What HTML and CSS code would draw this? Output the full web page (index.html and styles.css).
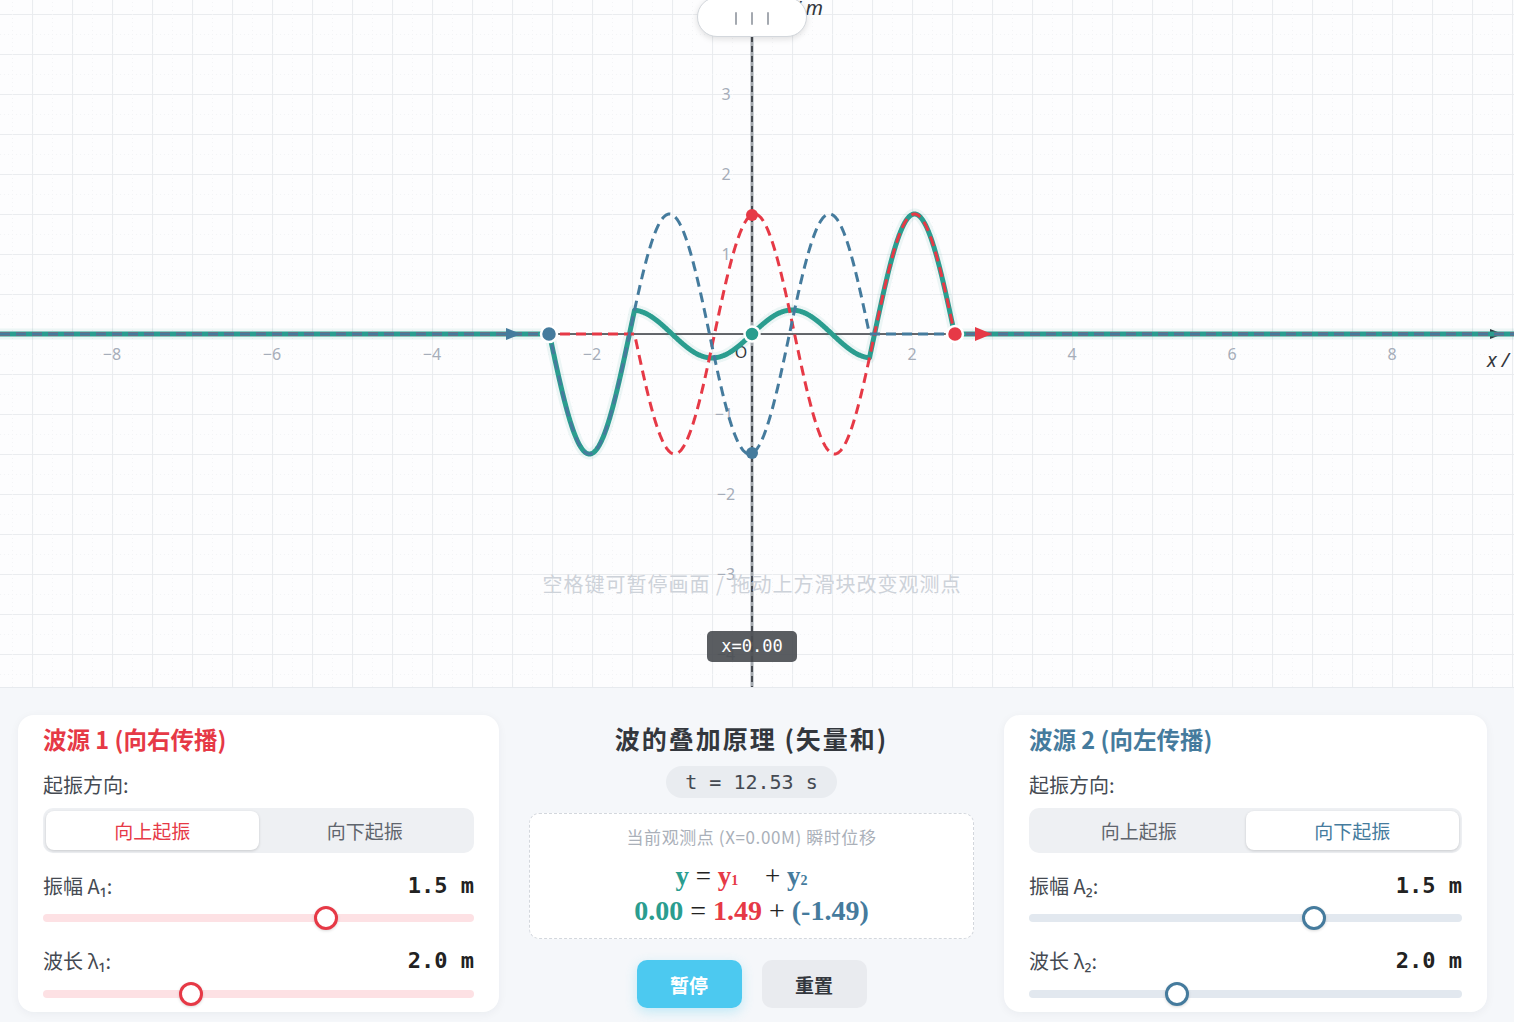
FILE: index.html
```html
<!DOCTYPE html>
<html lang="zh-CN">
<head>
<meta charset="utf-8">
<title>波的叠加原理</title>
<link rel="stylesheet" href="styles.css">
</head>
<body>
<div class="app">
  <div class="stage">
    <svg class="plot" width="1514" height="687" viewBox="0 0 1514 687">
      <defs>
        <pattern id="grid" x="32" y="14" width="40" height="40" patternUnits="userSpaceOnUse">
          <path d="M0 0.5H40M0.5 0V40" stroke="#eaecef" stroke-width="1.2" fill="none"/>
          <path d="M0 20.5H40M20.5 0V40" stroke="#f3f4f6" stroke-width="1" stroke-dasharray="1 3" fill="none"/>
        </pattern>
      </defs>
      <rect x="0" y="0" width="1514" height="687" fill="url(#grid)"/>
      <g class="ticks">
        <text x="112" y="360">−8</text>
        <text x="272" y="360">−6</text>
        <text x="432" y="360">−4</text>
        <text x="592" y="360">−2</text>
        <text x="912" y="360">2</text>
        <text x="1072" y="360">4</text>
        <text x="1232" y="360">6</text>
        <text x="1392" y="360">8</text>
        <text x="726" y="100">3</text>
        <text x="726" y="180">2</text>
        <text x="726" y="260">1</text>
        <text x="724" y="420">−1</text>
        <text x="726" y="500">−2</text>
        <text x="726" y="580">−3</text>
        <text x="726" y="660">−4</text>
      </g>
      <text class="origin" x="741" y="358">O</text>
      <text class="axname" x="823" y="15" text-anchor="end">y / m</text>
      <text class="axname" x="1487" y="367">x / m</text>
      <line x1="0" y1="334" x2="1514" y2="334" stroke="#33373d" stroke-width="1.6"/>
      <polygon points="1490,329 1503,334 1490,339" fill="#33373d"/>
      <line x1="752" y1="36" x2="752" y2="687" stroke="#a2a7ad" stroke-width="3"/>
      <line x1="752" y1="36" x2="752" y2="687" stroke="#30343a" stroke-width="1.6" stroke-dasharray="6 4"/>
      <path id="sumGlow" fill="none" stroke="#2a9d8f" stroke-opacity="0.08" stroke-width="11" stroke-linejoin="round"/>
      <path id="sum" fill="none" stroke="#2a9d8f" stroke-width="5" stroke-linejoin="round" stroke-linecap="round"/>
      <path id="w1" fill="none" stroke="#e63946" stroke-width="3" stroke-dasharray="10 6"/>
      <path id="w2" fill="none" stroke="#457b9d" stroke-width="3" stroke-dasharray="10 6"/>
      <polygon points="975,327 992,334 975,341" fill="#e63946"/>
      <polygon points="506,328 521,334 506,340" fill="#457b9d"/>
      <circle cx="752" cy="215" r="6" fill="#e63946"/>
      <circle cx="752" cy="453" r="6" fill="#457b9d"/>
      <circle cx="549" cy="334" r="8" fill="#457b9d" stroke="#fff" stroke-width="2.5"/>
      <circle cx="955" cy="334" r="8" fill="#e63946" stroke="#fff" stroke-width="2.5"/>
      <circle cx="752" cy="334" r="7.5" fill="#2a9d8f" stroke="#fff" stroke-width="2.5"/>
    </svg>
    <div class="handle"><span></span><span></span><span></span></div>
    <div class="hint">空格键可暂停画面 / 拖动上方滑块改变观测点</div>
    <div class="tip">x=0.00</div>
  </div>

  <div class="panel">
    <section class="card card-red">
      <h2 class="card-title">波源 1 (向右传播)</h2>
      <div class="dir-label">起振方向:</div>
      <div class="seg">
        <button class="seg-btn active">向上起振</button>
        <button class="seg-btn">向下起振</button>
      </div>
      <div class="row first">
        <span class="lbl">振幅 A₁:</span>
        <span class="val">1.5 m</span>
      </div>
      <input class="slider s-amp" type="range" min="0.5" max="2" step="0.1" value="1.5">
      <div class="row second">
        <span class="lbl">波长 λ₁:</span>
        <span class="val">2.0 m</span>
      </div>
      <input class="slider s-wl" type="range" min="1" max="4" step="0.1" value="2">
    </section>

    <section class="center">
      <h1 class="main-title">波的叠加原理 (矢量和)</h1>
      <div class="time">t = 12.53 s</div>
      <div class="readout">
        <div class="sub">当前观测点 (X=0.00M) 瞬时位移</div>
        <div class="eq eq1"><b class="c-sum">y</b> <span class="op">=</span> <b class="c-1">y<small>1</small></b> <span class="op plus">+</span> <b class="c-2">y<small>2</small></b></div>
        <div class="eq eq2"><b class="c-sum">0.00</b> <span class="op">=</span> <b class="c-1">1.49</b> <span class="op">+</span> <b class="c-2">(-1.49)</b></div>
      </div>
      <div class="btns">
        <button class="btn btn-pause">暂停</button>
        <button class="btn btn-reset">重置</button>
      </div>
    </section>

    <section class="card card-blue">
      <h2 class="card-title">波源 2 (向左传播)</h2>
      <div class="dir-label">起振方向:</div>
      <div class="seg">
        <button class="seg-btn">向上起振</button>
        <button class="seg-btn active">向下起振</button>
      </div>
      <div class="row first">
        <span class="lbl">振幅 A₂:</span>
        <span class="val">1.5 m</span>
      </div>
      <input class="slider s-amp" type="range" min="0.5" max="2" step="0.1" value="1.5">
      <div class="row second">
        <span class="lbl">波长 λ₂:</span>
        <span class="val">2.0 m</span>
      </div>
      <input class="slider s-wl" type="range" min="1" max="4" step="0.1" value="2">
    </section>
  </div>
</div>
<script src="script.js"></script>
</body>
</html>
```

FILE: styles.css
```css
html, body {
  margin: 0;
  padding: 0;
  width: 1514px;
  height: 1022px;
  overflow: hidden;
  background: #f5f7fa;
  font-family: "Noto Sans CJK SC", "Noto Sans", sans-serif;
}

.app {
  width: 1514px;
}

.stage {
  position: relative;
  height: 687px;
  background: #fdfdfe;
  overflow: hidden;
}

.plot {
  display: block;
}

.ticks text {
  font-family: "Noto Sans", sans-serif;
  font-size: 16px;
  fill: #a6adb9;
  text-anchor: middle;
}

.origin {
  font-family: "Noto Sans", sans-serif;
  font-size: 16px;
  fill: #33373d;
  text-anchor: middle;
}

.axname {
  font-family: "Noto Sans", sans-serif;
  font-style: italic;
  font-size: 20px;
  fill: #33373d;
}

.handle {
  position: absolute;
  left: 697px;
  top: -3px;
  width: 110px;
  height: 40px;
  box-sizing: border-box;
  background: #fff;
  border: 1px solid #d3d7dc;
  border-radius: 20px;
  box-shadow: 0 2px 6px rgba(0, 0, 0, 0.12);
  display: flex;
  justify-content: center;
  align-items: center;
  gap: 14px;
  padding-top: 3px;
}

.handle span {
  width: 2px;
  height: 13px;
  background: #a4a9b0;
  border-radius: 1px;
}

.hint {
  position: absolute;
  left: 0;
  width: 1504px;
  top: 570px;
  text-align: center;
  font-size: 20px;
  line-height: 28px;
  color: #cdd2d9;
  letter-spacing: 1px;
}

.tip {
  position: absolute;
  left: 707px;
  top: 631px;
  width: 90px;
  height: 31px;
  border-radius: 5px;
  background: rgba(72, 75, 80, 0.9);
  color: #fff;
  font-family: "DejaVu Sans Mono", monospace;
  font-size: 17px;
  line-height: 31px;
  text-align: center;
}

.panel {
  display: grid;
  grid-template-columns: 481px 1fr 483px;
  padding: 27px 27px 0 18px;
  height: 335px;
  box-sizing: border-box;
  border-top: 1px solid #e7eaee;
  background: #f5f7fa;
}

.card {
  background: #fff;
  border-radius: 16px;
  box-shadow: 0 2px 10px rgba(20, 30, 50, 0.05);
  height: 297px;
  box-sizing: border-box;
  padding: 8px 25px 0;
}

.card-title {
  margin: 0;
  font-size: 23.5px;
  line-height: 32px;
  font-weight: 700;
}

.card-red .card-title { color: #e63946; }
.card-blue .card-title { color: #457b9d; }

.dir-label {
  margin-top: 17px;
  font-size: 20px;
  line-height: 26px;
  color: #454a52;
}

.seg {
  margin-top: 10px;
  height: 45px;
  box-sizing: border-box;
  padding: 3px;
  border-radius: 10px;
  background: #eef0f3;
  display: grid;
  grid-template-columns: 1fr 1fr;
}

.seg-btn {
  border: 0;
  background: transparent;
  font-family: "Noto Sans CJK SC", sans-serif;
  font-size: 19px;
  color: #5f656d;
  border-radius: 8px;
  padding: 0;
  cursor: pointer;
}

.seg-btn.active {
  background: #fff;
  box-shadow: 0 1px 3px rgba(0, 0, 0, 0.16);
}

.card-red .seg-btn.active { color: #e63946; }
.card-blue .seg-btn.active { color: #457b9d; }

.row {
  display: flex;
  justify-content: space-between;
  align-items: center;
  height: 24px;
}

.row.first { margin-top: 20px; }
.row.second { margin-top: 26px; }

.lbl {
  font-size: 20px;
  color: #454a52;
}

.val {
  font-family: "DejaVu Sans Mono", monospace;
  font-weight: 700;
  font-size: 22px;
  color: #222;
}

.slider {
  -webkit-appearance: none;
  appearance: none;
  display: block;
  width: 100%;
  height: 8px;
  margin: 17px 0 0;
  border-radius: 4px;
  outline: none;
}

.slider.s-wl { margin-top: 18px; }

.card-red .slider { background: #fde1e4; }
.card-blue .slider { background: #e2e8ef; }

.slider::-webkit-slider-thumb {
  -webkit-appearance: none;
  appearance: none;
  width: 24px;
  height: 24px;
  box-sizing: border-box;
  border-radius: 50%;
  background: #fff;
  border: 3px solid #e63946;
  box-shadow: 0 1px 3px rgba(0, 0, 0, 0.15);
  cursor: pointer;
}

.card-blue .slider::-webkit-slider-thumb {
  border-color: #457b9d;
}

.center {
  display: flex;
  flex-direction: column;
  align-items: center;
  padding: 0 30px;
}

.main-title {
  margin: 7px 0 0;
  font-size: 25px;
  line-height: 32px;
  font-weight: 700;
  color: #33373d;
  letter-spacing: 2px;
}

.time {
  margin-top: 12px;
  height: 32px;
  line-height: 32px;
  padding: 0 19px;
  border-radius: 16px;
  background: #e9ecf0;
  font-family: "DejaVu Sans Mono", monospace;
  font-size: 20px;
  color: #454a52;
}

.readout {
  margin-top: 15px;
  align-self: stretch;
  height: 126px;
  box-sizing: border-box;
  border: 1.5px dashed #d3d7dd;
  border-radius: 10px;
  background: #fff;
  text-align: center;
  padding-top: 12px;
}

.sub {
  font-size: 17px;
  line-height: 22px;
  color: #aab0b9;
  letter-spacing: 0.6px;
}

.eq {
  font-family: "Liberation Serif", "Times New Roman", serif;
  color: #222;
  white-space: pre;
}

.eq1 {
  margin-top: 13px;
  font-size: 27px;
  line-height: 30px;
  padding-right: 20px;
}

.eq2 {
  margin-top: 0;
  font-size: 28px;
  line-height: 29px;
}

.eq b { font-weight: 700; }

.eq small {
  font-size: 14px;
  vertical-align: 0;
}

.eq .plus { margin-left: 20px; }

.c-sum { color: #2a9d8f; }
.c-1 { color: #e63946; }
.c-2 { color: #457b9d; }

.btns {
  margin-top: 21px;
  display: flex;
  gap: 20px;
}

.btn {
  width: 105px;
  height: 48px;
  border: 0;
  border-radius: 10px;
  font-family: "Noto Sans CJK SC", sans-serif;
  font-size: 19px;
  font-weight: 700;
  cursor: pointer;
}

.btn-pause {
  background: #4cc9f0;
  color: #fff;
  box-shadow: 0 4px 12px rgba(76, 201, 240, 0.3);
}

.btn-reset {
  background: #e9ebef;
  color: #33373d;
}
```

FILE: script.js
```js
(function () {
  var X0 = 752, Y0 = 334, S = 80;
  var A = 1.5, k = Math.PI, delta = 0.1;
  var xf1 = 2.5 + delta / Math.PI;
  var tail1 = xf1 - 4;
  var xf2 = -xf1;
  var tail2 = xf2 + 4;

  function y1(x) {
    return (x <= xf1 && x >= tail1) ? A * Math.sin(k * (xf1 - x)) : 0;
  }
  function y2(x) {
    return (x >= xf2 && x <= tail2) ? -A * Math.sin(k * (x - xf2)) : 0;
  }
  function ys(x) { return y1(x) + y2(x); }

  var breaks = [tail1, xf1, xf2, tail2].map(function (b) { return X0 + b * S; });

  function build(f) {
    var xs = [];
    for (var px = 0; px <= 1514; px += 0.5) xs.push(px);
    breaks.forEach(function (b) { xs.push(b - 0.01, b + 0.01); });
    xs.sort(function (a, b) { return a - b; });
    var d = '';
    for (var i = 0; i < xs.length; i++) {
      var px2 = xs[i];
      var y = Y0 - f((px2 - X0) / S) * S;
      d += (i ? 'L' : 'M') + px2.toFixed(2) + ' ' + y.toFixed(2);
    }
    return d;
  }

  var sum = build(ys);
  document.getElementById('sum').setAttribute('d', sum);
  document.getElementById('sumGlow').setAttribute('d', sum);
  document.getElementById('w1').setAttribute('d', build(y1));
  document.getElementById('w2').setAttribute('d', build(y2));
})();
```
